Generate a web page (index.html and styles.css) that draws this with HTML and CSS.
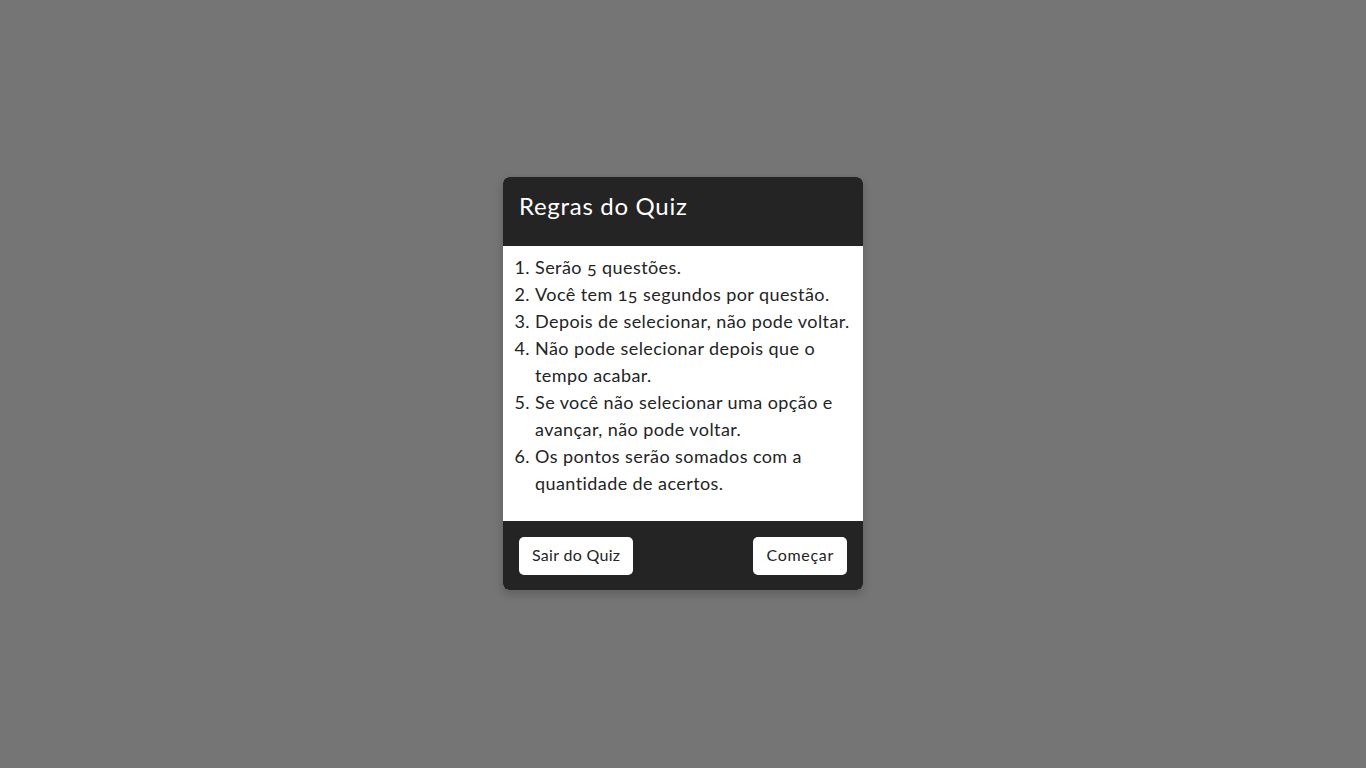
FILE: index.html
```html
<!DOCTYPE html>
<html lang="pt-BR">
<head>
<meta charset="utf-8">
<title>Regras do Quiz</title>
<link rel="stylesheet" href="styles.css">
</head>
<body>
<div class="page">
  <div class="card">
    <div class="card-header">
      <h1 class="title">Regras do Quiz</h1>
    </div>
    <div class="card-body">
      <ol class="rules">
        <li>Serão 5 questões.</li>
        <li>Você tem 15 segundos por questão.</li>
        <li>Depois de selecionar, não pode voltar.</li>
        <li>Não pode selecionar depois que o tempo acabar.</li>
        <li>Se você não selecionar uma opção e avançar, não pode voltar.</li>
        <li>Os pontos serão somados com a quantidade de acertos.</li>
      </ol>
    </div>
    <div class="card-footer">
      <button class="btn">Sair do Quiz</button>
      <button class="btn btn-start">Começar</button>
    </div>
  </div>
</div>
</body>
</html>
```

FILE: styles.css
```css
* { box-sizing: border-box; }
html, body { margin: 0; padding: 0; }
body {
  background: #757575;
  font-family: "Lato", "Open Sans", sans-serif;
  color: #242424;
}
.page {
  width: 1366px;
  height: 768px;
  display: flex;
  align-items: center;
  justify-content: center;
}
.card {
  width: 360px;
  margin-top: -1px;
  border-radius: 6px;
  background: #fff;
  overflow: hidden;
  box-shadow: 0 4px 10px rgba(0,0,0,0.2);
}
.card-header {
  background: #242424;
  height: 69px;
  padding: 14px 16px 0;
}
.title {
  margin: 0;
  color: #fff;
  font-size: 24px;
  font-weight: 400;
  line-height: 30px;
  letter-spacing: 0.7px;
}
.card-body {
  background: #fff;
  height: 275px;
  padding: 8px 10px 0 16px;
}
.rules {
  margin: 0;
  padding-left: 16px;
  font-size: 18px;
  line-height: 27px;
  letter-spacing: 0.42px;
  font-variant-numeric: oldstyle-nums;
}
.card-footer {
  background: #242424;
  height: 69px;
  padding: 16px 16px 0;
  display: flex;
  justify-content: space-between;
  align-items: flex-start;
}
.btn {
  height: 38px;
  padding: 0 13px 4px;
  border: none;
  border-radius: 5px;
  background: #fff;
  color: #242424;
  font-family: "Lato", "Open Sans", sans-serif;
  font-size: 16px;
  letter-spacing: 0.3px;
  cursor: pointer;
}
.btn-start {
  letter-spacing: 0.7px;
}
```
